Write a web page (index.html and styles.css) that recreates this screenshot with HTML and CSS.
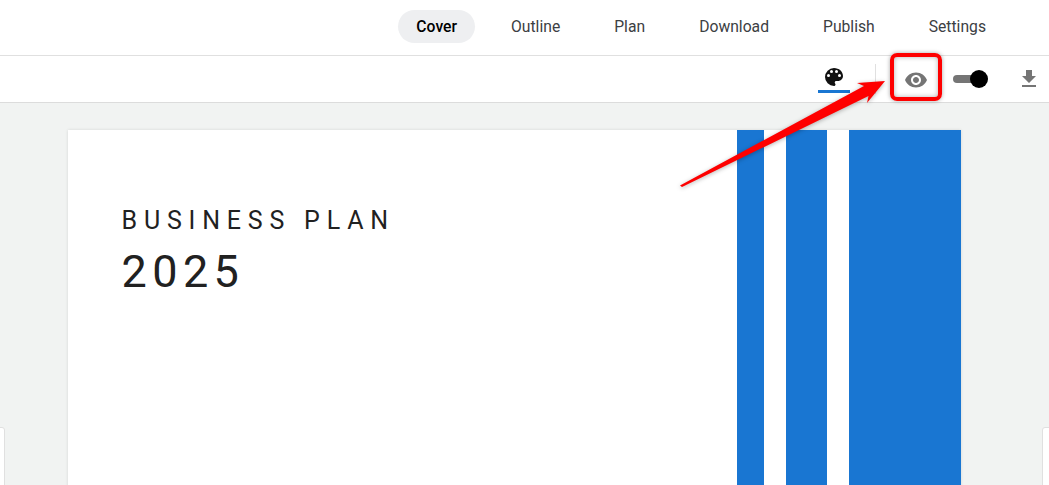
FILE: index.html
```html
<!DOCTYPE html>
<html lang="en">
<head>
<meta charset="utf-8">
<title>Business Plan Cover</title>
<link rel="stylesheet" href="styles.css">
</head>
<body>
<div class="app">
  <header class="nav">
    <a class="nav-item active">Cover</a>
    <a class="nav-item">Outline</a>
    <a class="nav-item">Plan</a>
    <a class="nav-item">Download</a>
    <a class="nav-item">Publish</a>
    <a class="nav-item">Settings</a>
  </header>
  <div class="toolbar">
    <div class="tool-tab">
      <svg class="icon" viewBox="0 0 24 24" width="24" height="24"><path fill="#111" d="M12 3a9 9 0 0 0 0 18c.83 0 1.5-.67 1.5-1.5 0-.39-.15-.74-.39-1.01-.23-.26-.38-.61-.38-.99 0-.83.67-1.5 1.5-1.5H16c2.76 0 5-2.24 5-5 0-4.42-4.03-8-9-8zm-5.5 9a1.5 1.5 0 1 1 0-3 1.5 1.5 0 0 1 0 3zm3-4a1.5 1.5 0 1 1 0-3 1.5 1.5 0 0 1 0 3zm5 0a1.5 1.5 0 1 1 0-3 1.5 1.5 0 0 1 0 3zm3 4a1.5 1.5 0 1 1 0-3 1.5 1.5 0 0 1 0 3z"/></svg>
    </div>
    <span class="divider"></span>
    <div class="tool-btn">
      <svg class="icon" viewBox="0 0 24 24" width="24" height="24"><path fill="#757575" d="M12 4.5C7 4.5 2.73 7.61 1 12c1.73 4.39 6 7.5 11 7.5s9.27-3.11 11-7.5c-1.73-4.39-6-7.5-11-7.5zM12 17c-2.76 0-5-2.24-5-5s2.24-5 5-5 5 2.24 5 5-2.24 5-5 5zm0-8c-1.66 0-3 1.34-3 3s1.34 3 3 3 3-1.34 3-3-1.34-3-3-3z"/></svg>
    </div>
    <div class="switch"><span class="switch-track"></span><span class="switch-thumb"></span></div>
    <div class="tool-dl">
      <svg class="icon" viewBox="0 0 24 24" width="24" height="24"><path fill="#757575" d="M19 9h-4V3H9v6H5l7 7 7-7zM5 18v2h14v-2H5z"/></svg>
    </div>
  </div>
  <main class="canvas">
    <div class="side-card left"></div>
    <section class="page">
      <div class="titles">
        <h1 class="title">BUSINESS PLAN</h1>
        <p class="year">2025</p>
      </div>
      <div class="stripes">
        <span class="stripe s1"></span>
        <span class="stripe s2"></span>
        <span class="stripe s3"></span>
      </div>
    </section>
    <div class="side-card right"></div>
  </main>
  <div class="callout-box"></div>
  <svg class="callout-arrow" viewBox="0 0 1049 485" width="1049" height="485">
    <polygon fill="#fe0000" points="680,185.500 864,86 857,83 885,81 867,103 868.500,96 682,187"/>
  </svg>
</div>
</body>
</html>
```
FILE: styles.css
```css
* { box-sizing: border-box; }
html, body { margin: 0; height: 100%; overflow: hidden; }
body { font-family: Roboto, "Liberation Sans", sans-serif; background: #fff; color: #202124; }
.app { width: 1049px; height: 485px; display: flex; flex-direction: column; overflow: hidden; position: relative; }

.nav { height: 56px; flex: none; display: flex; align-items: flex-start; justify-content: flex-end; gap: 18px; padding: 10px 45px 0 0; border-bottom: 1px solid #e0e0e0; background: #fff; }
.nav-item { height: 33px; padding: 0 18px; border-radius: 17px; font-size: 15.7px; line-height: 33px; color: #3c4043; letter-spacing: 0; }
.nav-item.active { background: #eeeff1; color: #000; font-weight: 500; }

.toolbar { height: 47px; flex: none; display: flex; align-items: center; justify-content: flex-end; padding-right: 8px; background: #fff; border-bottom: 1px solid #dcdcdc; }
.tool-tab { width: 32px; height: 34px; margin-bottom: 6px; display: flex; align-items: center; justify-content: center; border-bottom: 3px solid #1976d2; padding-top: 4px; }
.divider { width: 1px; height: 30px; background: #e0e0e0; margin: 0 28px 0 25px; }
.icon { display: block; }
.tool-btn { width: 24px; height: 24px; margin-top: 1px; }
.switch { width: 36px; height: 20px; margin-left: 25px; position: relative; }
.switch-track { display: block; width: 28px; height: 8px; border-radius: 4px; background: #757575; position: absolute; left: 0; top: 6px; }
.switch-thumb { display: block; width: 18px; height: 18px; border-radius: 50%; background: #000; position: absolute; left: 17px; top: 1px; }
.tool-dl { width: 24px; height: 24px; margin-left: 28px; margin-top: -1px; }

.canvas { flex: 1; background: #f1f3f2; display: flex; justify-content: center; gap: 0; padding-top: 27px; position: relative; }
.page { width: 893px; height: 400px; margin-left: -21px; background: #fff; box-shadow: 0 0 3px rgba(0,0,0,.12); display: flex; justify-content: space-between; }
.titles { padding: 76px 0 0 54px; color: #212121; }
.title { margin: 0; font-size: 25px; font-weight: 400; line-height: 30px; letter-spacing: 6.8px; white-space: nowrap; }
.year { margin: 10px 0 0; font-size: 45px; font-weight: 400; line-height: 52px; letter-spacing: 5.4px; }
.stripes { display: flex; gap: 22px; height: 100%; }
.stripe { display: block; height: 100%; background: #1976d2; }
.s1 { width: 27px; }
.s2 { width: 41px; }
.s3 { width: 112px; }

.side-card { position: absolute; top: 324px; width: 8px; height: 100px; background: #fff; border: 1px solid #e0e0e0; }
.side-card.left { left: -3px; border-radius: 0 3px 0 0; }
.side-card.right { right: -1px; border-radius: 3px 0 0 0; }

.callout-box { position: absolute; left: 890px; top: 53px; width: 52px; height: 48px; border: 4px solid #fe0000; border-radius: 7px; box-shadow: 0 0 4px rgba(0,0,0,.35), inset 0 0 5px rgba(0,0,0,.3); }
.callout-arrow { position: absolute; left: 0; top: 0; pointer-events: none; filter: drop-shadow(0 1px 2px rgba(0,0,0,.3)); }
```
